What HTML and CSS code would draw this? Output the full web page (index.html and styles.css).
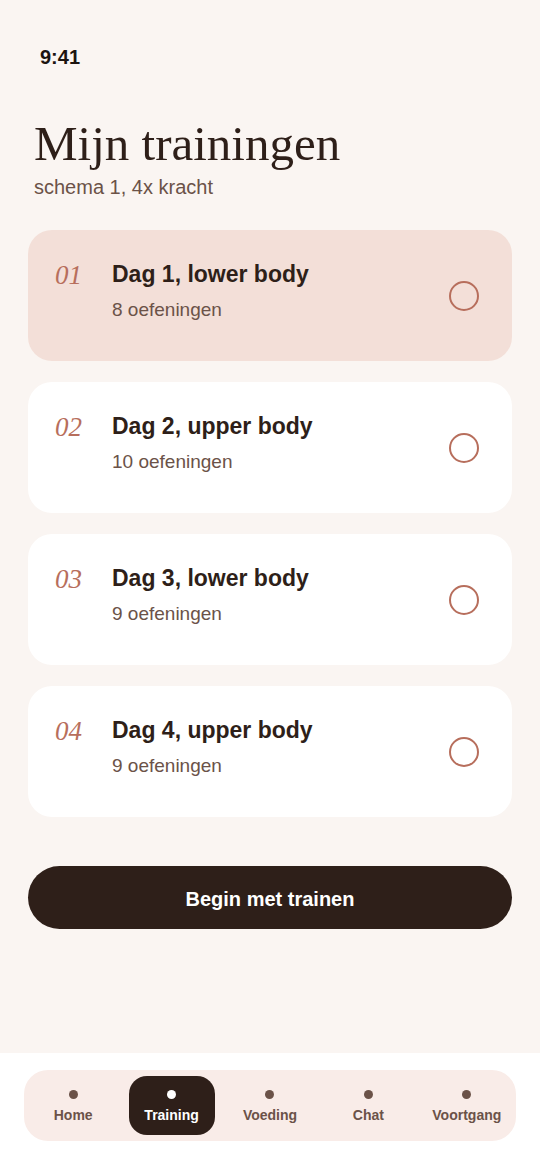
FILE: index.html
```html
<!DOCTYPE html>
<html>
<head>
    <title>Mijn trainingen</title>
    <link rel="stylesheet" href="styles.css">
</head>
<body>
<div class="screen">
    <div class="status">9:41</div>

    <div class="content">
        <div class="header">
            <h1>Mijn trainingen</h1>
            <p class="sub">schema 1, 4x kracht</p>
        </div>

        <div class="list">
            <div class="card active">
                <span class="num">01</span>
                <div class="info">
                    <div class="title">Dag 1, lower body</div>
                    <div class="count">8 oefeningen</div>
                </div>
                <span class="check"></span>
            </div>
            <div class="card">
                <span class="num">02</span>
                <div class="info">
                    <div class="title">Dag 2, upper body</div>
                    <div class="count">10 oefeningen</div>
                </div>
                <span class="check"></span>
            </div>
            <div class="card">
                <span class="num">03</span>
                <div class="info">
                    <div class="title">Dag 3, lower body</div>
                    <div class="count">9 oefeningen</div>
                </div>
                <span class="check"></span>
            </div>
            <div class="card">
                <span class="num">04</span>
                <div class="info">
                    <div class="title">Dag 4, upper body</div>
                    <div class="count">9 oefeningen</div>
                </div>
                <span class="check"></span>
            </div>
        </div>

        <button class="start">Begin met trainen</button>
    </div>

    <div class="navwrap">
        <nav class="nav">
            <div class="tab"><span class="dot"></span>Home</div>
            <div class="tab current"><span class="dot"></span>Training</div>
            <div class="tab"><span class="dot"></span>Voeding</div>
            <div class="tab"><span class="dot"></span>Chat</div>
            <div class="tab"><span class="dot"></span>Voortgang</div>
        </nav>
    </div>
</div>
</body>
</html>
```

FILE: styles.css
```css
body {
    margin: 0;
    font-family: "Liberation Sans", Arial, sans-serif;
    background-color: #faf5f2;
    color: #2e1f19;
}
.screen {
    width: 540px;
    height: 1170px;
    display: flex;
    flex-direction: column;
}
.status {
    padding: 44px 40px 0;
    font-size: 20px;
    line-height: 26px;
    font-weight: bold;
    color: #1c1410;
}
.content {
    flex: 1;
    padding: 0 28px;
}
.header {
    padding: 46px 6px 0;
}
h1 {
    margin: 0;
    font-family: "Liberation Serif", Georgia, serif;
    font-weight: normal;
    font-size: 49px;
    line-height: 56px;
    color: #2e1f19;
}
.sub {
    margin: 3px 0 0;
    font-size: 20px;
    line-height: 24px;
    color: #6b5248;
}
.list {
    margin-top: 31px;
    display: flex;
    flex-direction: column;
    gap: 21px;
}
.card {
    height: 131px;
    box-sizing: border-box;
    background-color: #fff;
    border-radius: 24px;
    display: flex;
    align-items: flex-start;
    padding: 30px 33px 0 27px;
}
.card.active {
    background-color: #f3dfd8;
}
.num {
    width: 57px;
    font-family: "Liberation Serif", Georgia, serif;
    font-style: italic;
    font-size: 27px;
    line-height: 30px;
    color: #b76e5c;
}
.info {
    flex: 1;
}
.title {
    font-size: 23px;
    line-height: 28px;
    font-weight: bold;
    color: #2e1f19;
}
.count {
    margin-top: 10px;
    font-size: 19px;
    line-height: 24px;
    color: #6b5248;
}
.check {
    align-self: center;
    margin-top: -30px;
    width: 26px;
    height: 26px;
    border: 2px solid #b76e5c;
    border-radius: 50%;
}
.start {
    display: block;
    width: 100%;
    height: 63px;
    margin-top: 49px;
    padding-top: 4px;
    border: none;
    border-radius: 32px;
    background-color: #2e1f19;
    color: #fff;
    font-family: "Liberation Sans", Arial, sans-serif;
    font-size: 20px;
    font-weight: bold;
}
.navwrap {
    background-color: #fff;
    padding: 17px 24px 29px;
}
.nav {
    height: 71px;
    box-sizing: border-box;
    background-color: #f9ece8;
    border-radius: 24px;
    display: grid;
    grid-template-columns: repeat(5, 1fr);
    align-items: center;
}
.tab {
    display: flex;
    flex-direction: column;
    align-items: center;
    gap: 8px;
    padding-top: 2px;
    font-size: 14px;
    font-weight: bold;
    color: #6b5248;
}
.tab .dot {
    width: 9px;
    height: 9px;
    border-radius: 50%;
    background-color: #6b5248;
}
.tab.current {
    justify-self: center;
    width: 86px;
    height: 59px;
    box-sizing: border-box;
    padding-top: 14px;
    background-color: #2e1f19;
    border-radius: 18px;
    color: #fff;
}
.tab.current .dot {
    background-color: #fff;
}
```
